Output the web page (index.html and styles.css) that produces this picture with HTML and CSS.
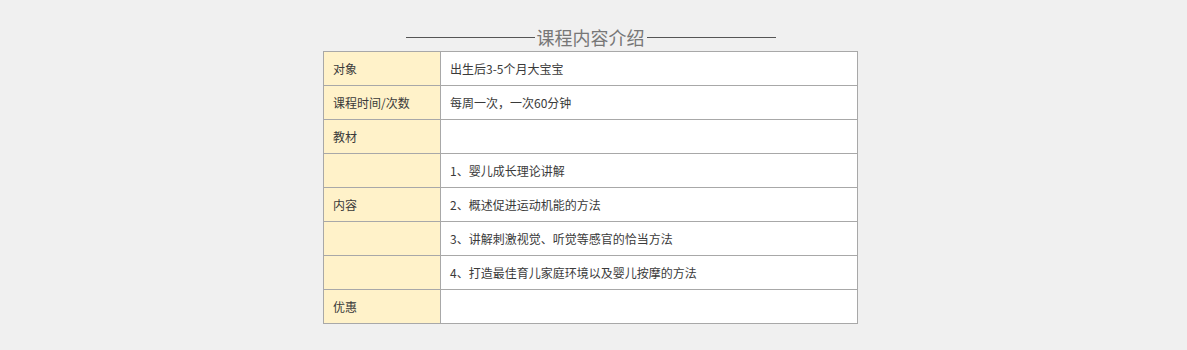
FILE: index.html
```html
<!DOCTYPE html>
<html lang="zh-CN">
<head>
<meta charset="UTF-8">
<title>课程内容介绍</title>
<link rel="stylesheet" href="styles.css">
</head>
<body>
<div class="course">
    <h2 class="course-title"><span class="line"></span>课程内容介绍<span class="line"></span></h2>
    <table class="course-table">
        <tr><td class="label">对象</td><td>出生后3-5个月大宝宝</td></tr>
        <tr><td class="label">课程时间/次数</td><td>每周一次，一次60分钟</td></tr>
        <tr><td class="label">教材</td><td></td></tr>
        <tr><td class="label"></td><td>1、婴儿成长理论讲解</td></tr>
        <tr><td class="label">内容</td><td>2、概述促进运动机能的方法</td></tr>
        <tr><td class="label"></td><td>3、讲解刺激视觉、听觉等感官的恰当方法</td></tr>
        <tr><td class="label"></td><td>4、打造最佳育儿家庭环境以及婴儿按摩的方法</td></tr>
        <tr><td class="label">优惠</td><td></td></tr>
    </table>
</div>
</body>
</html>
```

FILE: styles.css
```css
body {
    margin: 0;
    padding-right: 6px;
    background-color: #f0f0f0;
    font-family: "Microsoft YaHei", "Noto Sans CJK SC", sans-serif;
    color: #3a3a3a;
}

.course {
    width: 535px;
    margin: 0 auto;
    padding-top: 28px;
}

.course-title {
    display: flex;
    align-items: center;
    justify-content: center;
    margin: 0 0 4px;
    height: 19px;
    font-size: 18px;
    font-weight: normal;
    color: #777;
    line-height: 19px;
}

.course-title .line {
    width: 129px;
    height: 1px;
    background-color: #555;
    margin: 0 2px;
}

.course-table {
    width: 535px;
    border-collapse: collapse;
    font-size: 12px;
}

.course-table td {
    height: 33px;
    padding: 0 0 0 9px;
    border: 1px solid #a8a8a8;
    background-color: #fff;
}

.course-table td.label {
    width: 107px;
    background-color: #fff2c9;
}
```
